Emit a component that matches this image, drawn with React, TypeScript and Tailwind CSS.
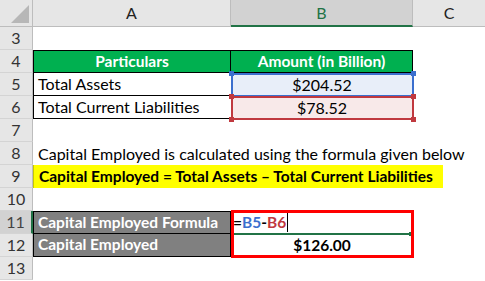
import type { ReactNode } from "react";

const cols = "grid grid-cols-[33px_198px_182px_72px]";

function RowNum({ n, active }: { n: number; active?: boolean }) {
  return (
    <div
      className={
        "flex items-center justify-center border-b border-[#d4d4d4] text-[16px] " +
        (active
          ? "bg-[#d2d2d2] text-[#444] border-r-2 border-r-[#217346]"
          : "bg-[#e6e6e6] text-[#333] border-r border-r-[#bdbdbd]")
      }
    >
      {n}
    </div>
  );
}

function Row({ n, active, children }: { n: number; active?: boolean; children?: ReactNode }) {
  return (
    <div className={cols + " h-[23px]"}>
      <RowNum n={n} active={active} />
      {children}
    </div>
  );
}

export default function App() {
  return (
    <div className="relative w-[485px] h-[281px] overflow-hidden bg-white font-['Lato',sans-serif] text-[16px] text-black leading-none">
      {/* column headers */}
      <div className={cols + " h-[27px]"}>
        <div className="relative bg-[#e6e6e6] border-r border-b border-[#bdbdbd]">
          <svg className="absolute right-[3px] bottom-[3px]" width="18" height="18" viewBox="0 0 18 18">
            <polygon points="18,0 18,18 0,18" fill="#b7b7b7" />
          </svg>
        </div>
        <div className="flex items-center justify-center bg-[#e6e6e6] border-r border-b border-[#bdbdbd] text-[#222]">A</div>
        <div className="flex items-center justify-center bg-[#d2d2d2] border-r border-[#bdbdbd] border-b-2 border-b-[#217346] text-[#217346]">B</div>
        <div className="flex items-center justify-center bg-[#e6e6e6] border-b border-[#bdbdbd] text-[#222]">C</div>
      </div>

      <Row n={3} />
      <Row n={4}>
        <div className="flex items-center justify-center bg-[#00b050] border border-black font-bold text-[15.5px] text-white">Particulars</div>
        <div className="flex items-center justify-center bg-[#00b050] border-y border-r border-black font-bold text-[15.5px] text-white">Amount (in Billion)</div>
      </Row>
      <Row n={5}>
        <div className="flex items-center pl-[4px] border-l border-b border-black">Total Assets</div>
        <div className="flex items-center justify-center bg-[#e8eef9]">$204.52</div>
      </Row>
      <Row n={6}>
        <div className="flex items-center pl-[4px] border-l border-b border-black">Total Current Liabilities</div>
        <div className="flex items-center justify-center bg-[#f8e9e9]">$78.52</div>
      </Row>
      <Row n={7} />
      <Row n={8}>
        <div className="col-span-3 flex items-center pl-[5px] whitespace-nowrap">
          Capital Employed is calculated using the formula given below
        </div>
      </Row>
      <Row n={9}>
        <div className="col-span-3">
          <div className="flex items-center h-full w-[410px] pl-[5px] bg-[#ffff00] border-l border-[#c8c800] font-bold text-[15.5px] whitespace-nowrap">
            Capital Employed = Total Assets – Total Current Liabilities
          </div>
        </div>
      </Row>
      <Row n={10} />
      <Row n={11} active>
        <div className="flex items-center pl-[4px] bg-[#808080] border border-black font-bold text-[15.5px] text-white">Capital Employed Formula</div>
        <div className="flex items-center pl-[2px] font-bold text-[15.5px]">
          <span>=</span>
          <span className="text-[#3b6fce]">B5</span>
          <span>-</span>
          <span className="text-[#c0393f]">B6</span>
          <span className="ml-[1px] w-px h-[19px] bg-black" />
        </div>
      </Row>
      <Row n={12}>
        <div className="flex items-center pl-[4px] bg-[#808080] border-x border-b border-black font-bold text-[15.5px] text-white">Capital Employed</div>
        <div className="flex items-center justify-center font-bold text-[15.5px]">$126.00</div>
      </Row>
      <Row n={13} />

      {/* selection overlays */}
      <div className="absolute left-[231px] top-[73px] w-[183px] h-[24px] border-2 border-[#3b6fce]" />
      <div className="absolute left-[231px] top-[96px] w-[183px] h-[24px] border-2 border-[#c0393f]" />
      <div className="absolute left-[229px] top-[71px] w-[5px] h-[5px] bg-[#3b6fce]" />
      <div className="absolute left-[411px] top-[71px] w-[5px] h-[5px] bg-[#3b6fce]" />
      <div className="absolute left-[229px] top-[94px] w-[5px] h-[5px] bg-[#c0393f]" />
      <div className="absolute left-[411px] top-[94px] w-[5px] h-[5px] bg-[#c0393f]" />
      <div className="absolute left-[229px] top-[117px] w-[5px] h-[5px] bg-[#c0393f]" />
      <div className="absolute left-[411px] top-[117px] w-[5px] h-[5px] bg-[#c0393f]" />

      <div className="absolute left-[233px] top-[233px] w-[178px] h-[2px] bg-[#217346]" />
      <div className="absolute left-[409px] top-[232px] w-[4px] h-[4px] bg-[#217346]" />
      <div className="absolute left-[231px] top-[210px] w-[183px] h-[48px] border-[3px] border-[#ff0000]" />
    </div>
  );
}
